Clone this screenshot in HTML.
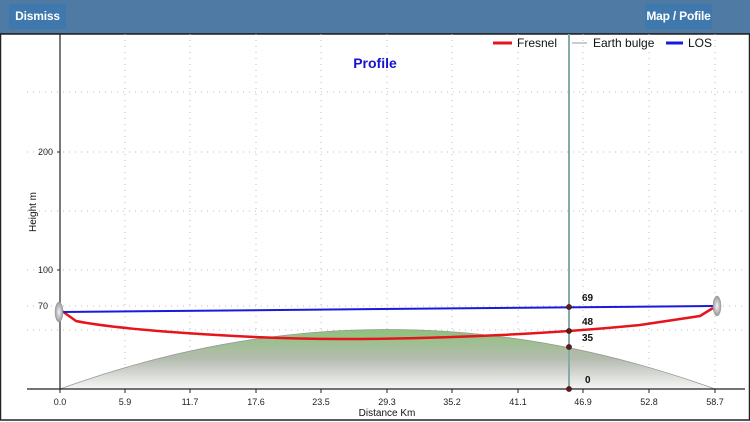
<!DOCTYPE html>
<html><head><style>
html,body{margin:0;padding:0;width:750px;height:422px;overflow:hidden;background:#fff;font-family:"Liberation Sans",sans-serif}
.hdr{position:absolute;left:0;top:0;width:750px;height:33px;background:#4f7aa3;border-bottom:1px solid #2e4a66}
.btn{position:absolute;top:4px;height:25px;background:#3f78ad;color:#fff;font-weight:bold;font-size:12px;line-height:25px;text-align:center;white-space:nowrap;letter-spacing:-0.2px}
</style></head><body>
<div class="hdr">
<div class="btn" style="left:9px;width:57px">Dismiss</div>
<div class="btn" style="left:645px;width:67px">Map / Pofile</div>
</div>
<svg style="position:absolute;left:0;top:0" width="750" height="422" font-family="Liberation Sans, sans-serif">
<defs>
<linearGradient id="g" x1="0" y1="329" x2="0" y2="389" gradientUnits="userSpaceOnUse">
<stop offset="0" stop-color="#8cc27a"/><stop offset="0.5" stop-color="#b5bcb0"/><stop offset="1" stop-color="#f6f6f6"/></linearGradient>
<radialGradient id="d"><stop offset="0" stop-color="#f4f4f4"/><stop offset="1" stop-color="#999"/></radialGradient>
</defs>
<rect x="0.5" y="34" width="749" height="386" fill="none" stroke="#222" stroke-width="1.5"/>
<g stroke="#bbb" stroke-width="1" stroke-dasharray="1,5">
<line x1="27" y1="92" x2="745" y2="92"/><line x1="27" y1="152" x2="745" y2="152"/><line x1="27" y1="211" x2="745" y2="211"/><line x1="27" y1="270" x2="745" y2="270"/><line x1="27" y1="306" x2="745" y2="306"/><line x1="27" y1="330" x2="745" y2="330"/>
<line x1="125" y1="34" x2="125" y2="389"/><line x1="190" y1="34" x2="190" y2="389"/><line x1="256" y1="34" x2="256" y2="389"/><line x1="321" y1="34" x2="321" y2="389"/><line x1="387" y1="34" x2="387" y2="389"/><line x1="452" y1="34" x2="452" y2="389"/><line x1="518" y1="34" x2="518" y2="389"/><line x1="583" y1="34" x2="583" y2="389"/><line x1="649" y1="34" x2="649" y2="389"/><line x1="715" y1="34" x2="715" y2="389"/>
</g>
<path d="M60,389 Q387,270 715,389 Z" fill="url(#g)" stroke="#999" stroke-width="0.8"/>
<line x1="60" y1="34" x2="60" y2="390" stroke="#222" stroke-width="1.2"/>
<line x1="27" y1="389" x2="745" y2="389" stroke="#222" stroke-width="1.2"/>
<g stroke="#222"><line x1="60" y1="389" x2="60" y2="393"/><line x1="125" y1="389" x2="125" y2="393"/><line x1="190" y1="389" x2="190" y2="393"/><line x1="256" y1="389" x2="256" y2="393"/><line x1="321" y1="389" x2="321" y2="393"/><line x1="387" y1="389" x2="387" y2="393"/><line x1="452" y1="389" x2="452" y2="393"/><line x1="518" y1="389" x2="518" y2="393"/><line x1="583" y1="389" x2="583" y2="393"/><line x1="649" y1="389" x2="649" y2="393"/><line x1="715" y1="389" x2="715" y2="393"/>
<line x1="57" y1="152" x2="60" y2="152"/><line x1="57" y1="270" x2="60" y2="270"/></g>
<path d="M62,311 L76,321 C120,330 250,339 340,339 C450,339 560,333 640,325 L700,316 L713,308" fill="none" stroke="#e4151b" stroke-width="2.5"/>
<path d="M62,312 L713,306" fill="none" stroke="#1a1adc" stroke-width="2"/>
<line x1="569" y1="34" x2="569" y2="389" stroke="#86aaa5" stroke-width="2"/>
<g fill="#7a1010" stroke="#222" stroke-width="0.8"><circle cx="569" cy="307" r="2.5"/><circle cx="569" cy="331" r="2.5"/><circle cx="569" cy="347" r="2.5"/><circle cx="569" cy="389" r="2.5"/></g>
<ellipse cx="59" cy="312" rx="4" ry="10" fill="url(#d)" stroke="#999" stroke-width="0.5"/>
<ellipse cx="717" cy="306" rx="4" ry="10" fill="url(#d)" stroke="#999" stroke-width="0.5"/>
<g font-size="9" fill="#222" text-anchor="middle">
<text x="60" y="405">0.0</text><text x="125" y="405">5.9</text><text x="190" y="405">11.7</text><text x="256" y="405">17.6</text><text x="321" y="405">23.5</text><text x="387" y="405">29.3</text><text x="452" y="405">35.2</text><text x="518" y="405">41.1</text><text x="583" y="405">46.9</text><text x="649" y="405">52.8</text><text x="715" y="405">58.7</text>
</g>
<g font-size="9" fill="#222" text-anchor="end"><text x="53" y="155">200</text><text x="53" y="273">100</text><text x="48" y="309">70</text></g>
<text x="387" y="416" font-size="10" text-anchor="middle" fill="#111">Distance Km</text>
<text transform="translate(36,212) rotate(-90)" font-size="10" text-anchor="middle" fill="#111">Height m</text>
<text x="375" y="68" font-size="14" font-weight="bold" fill="#1414d0" text-anchor="middle">Profile</text>
<g font-size="12" fill="#111">
<line x1="493" y1="43" x2="512" y2="43" stroke="#e4151b" stroke-width="3"/><text x="517" y="47">Fresnel</text>
<line x1="572" y1="43" x2="587" y2="43" stroke="#ccc" stroke-width="2"/><text x="593" y="47">Earth bulge</text>
<line x1="666" y1="43" x2="683" y2="43" stroke="#1a1adc" stroke-width="3"/><text x="688" y="47">LOS</text>
</g>
<g font-size="10" font-weight="bold" fill="#111"><text x="582" y="301">69</text><text x="582" y="325">48</text><text x="582" y="341">35</text><text x="585" y="383">0</text></g>
</svg>
</body></html>
